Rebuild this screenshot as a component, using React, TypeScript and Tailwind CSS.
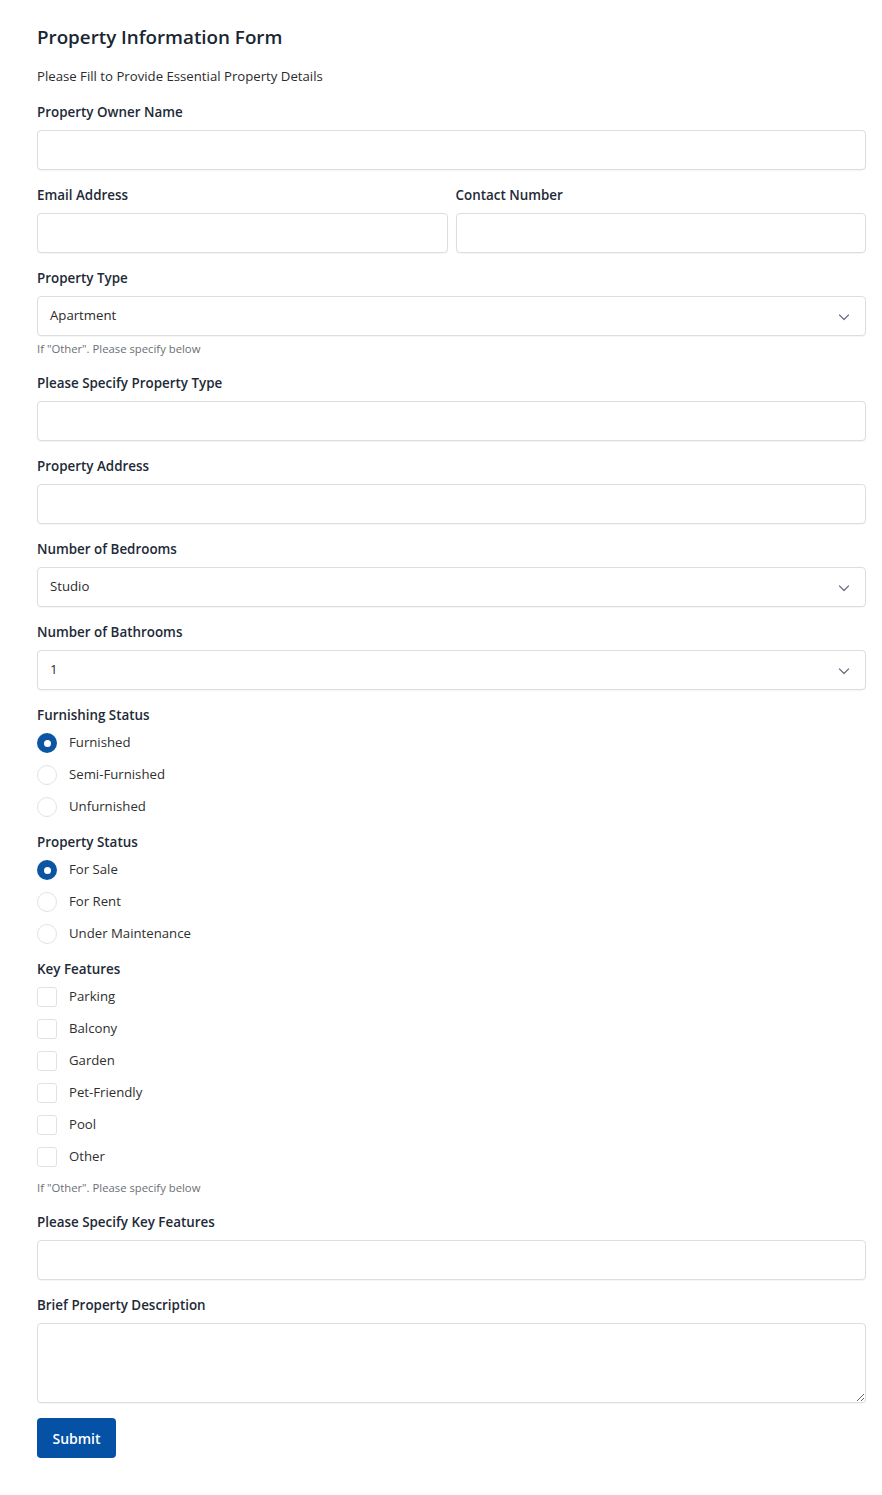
import React from "react";

const Label = ({ children }: { children: React.ReactNode }) => (
  <div className="text-[13.4px] leading-[20px] font-semibold text-[#1e2a37] mb-[8px]">{children}</div>
);

const Input = () => (
  <input
    type="text"
    className="block w-full h-[40px] rounded-[4px] border border-[#dadde1] bg-white px-3 text-[13px] outline-none shadow-[0_1px_1px_rgba(0,0,0,0.04)]"
  />
);

const Chevron = () => (
  <svg width="12" height="12" viewBox="0 0 12 12" fill="none" className="absolute right-[15px] top-[14px]">
    <path d="M1.5 4L6 8.5L10.5 4" stroke="#6b7280" strokeWidth="1.2" strokeLinecap="round" strokeLinejoin="round" />
  </svg>
);

const Select = ({ value }: { value: string }) => (
  <div className="relative h-[40px] w-full rounded-[4px] border border-[#dadde1] bg-white shadow-[0_1px_1px_rgba(0,0,0,0.04)] flex items-center px-[12px] text-[13.2px] text-[#2b2b2b]">
    <span>{value}</span>
    <Chevron />
  </div>
);

const Help = ({ className = "mt-[5px]" }: { className?: string }) => (
  <div className={`${className} text-[11.3px] leading-[16px] text-[#6b6f75]`}>If "Other". Please specify below</div>
);

const Radio = ({ label, checked }: { label: string; checked?: boolean }) => (
  <div className="flex items-center h-[20px] gap-[12px]">
    {checked ? (
      <span className="w-[20px] h-[20px] rounded-full bg-[#0b55a3] flex items-center justify-center shrink-0">
        <span className="w-[7px] h-[7px] rounded-full bg-white" />
      </span>
    ) : (
      <span className="w-[20px] h-[20px] rounded-full border border-[#e0e2e5] bg-white shrink-0" />
    )}
    <span className="text-[13.2px] text-[#2f2f2f]">{label}</span>
  </div>
);

const Check = ({ label }: { label: string }) => (
  <div className="flex items-center h-[20px] gap-[12px]">
    <span className="w-[20px] h-[20px] rounded-[3px] border border-[#e0e2e5] bg-white shrink-0" />
    <span className="text-[13.2px] text-[#2f2f2f]">{label}</span>
  </div>
);

export default function App() {
  return (
    <div className="bg-white min-h-[1495px] font-['Open_Sans',sans-serif] text-[#2f2f2f]">
      <div className="pl-[37px] pr-[16px] pt-[24px]">
        <h1 className="text-[18.8px] leading-[26px] font-semibold text-[#1a2633]">Property Information Form</h1>
        <p className="mt-[17px] text-[13.2px] leading-[18px] text-[#2b2b2b]">Please Fill to Provide Essential Property Details</p>

        <div className="mt-[17px]">
          <Label>Property Owner Name</Label>
          <Input />
        </div>

        <div className="mt-[15px] grid grid-cols-2 gap-[8px]">
          <div>
            <Label>Email Address</Label>
            <Input />
          </div>
          <div>
            <Label>Contact Number</Label>
            <Input />
          </div>
        </div>

        <div className="mt-[15px]">
          <Label>Property Type</Label>
          <Select value="Apartment" />
          <Help />
        </div>

        <div className="mt-[16px]">
          <Label>Please Specify Property Type</Label>
          <Input />
        </div>

        <div className="mt-[15px]">
          <Label>Property Address</Label>
          <Input />
        </div>

        <div className="mt-[15px]">
          <Label>Number of Bedrooms</Label>
          <Select value="Studio" />
        </div>

        <div className="mt-[15px]">
          <Label>Number of Bathrooms</Label>
          <Select value="1" />
        </div>

        <div className="mt-[15px]">
          <Label>Furnishing Status</Label>
          <div className="flex flex-col gap-[12px]">
            <Radio label="Furnished" checked />
            <Radio label="Semi-Furnished" />
            <Radio label="Unfurnished" />
          </div>
        </div>

        <div className="mt-[15px]">
          <Label>Property Status</Label>
          <div className="flex flex-col gap-[12px]">
            <Radio label="For Sale" checked />
            <Radio label="For Rent" />
            <Radio label="Under Maintenance" />
          </div>
        </div>

        <div className="mt-[15px]">
          <Label>Key Features</Label>
          <div className="flex flex-col gap-[12px]">
            <Check label="Parking" />
            <Check label="Balcony" />
            <Check label="Garden" />
            <Check label="Pet-Friendly" />
            <Check label="Pool" />
            <Check label="Other" />
          </div>
          <Help className="mt-[13px]" />
        </div>

        <div className="mt-[16px]">
          <Label>Please Specify Key Features</Label>
          <Input />
        </div>

        <div className="mt-[15px]">
          <Label>Brief Property Description</Label>
          <textarea className="block w-full h-[80px] rounded-[4px] border border-[#dadde1] bg-white px-3 py-2 text-[13px] outline-none shadow-[0_1px_1px_rgba(0,0,0,0.04)]" />
        </div>

        <button className="mt-[15px] h-[40px] w-[79px] rounded-[4px] bg-[#0451a5] text-white text-[14px] font-semibold">
          Submit
        </button>
      </div>
    </div>
  );
}
